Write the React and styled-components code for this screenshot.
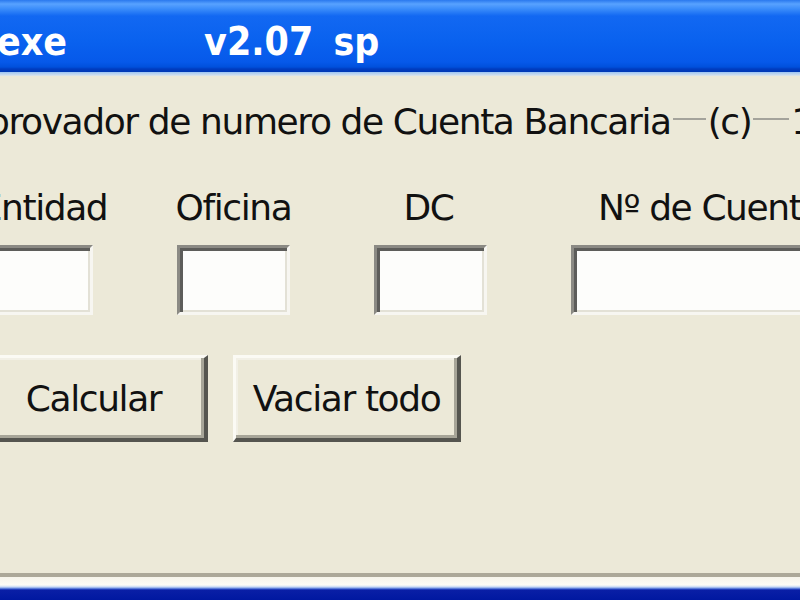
import React from 'react';
import styled, { createGlobalStyle } from 'styled-components';

const GlobalStyle = createGlobalStyle`
	html, body {
		margin: 0;
		padding: 0;
		width: 800px;
		height: 600px;
		overflow: hidden;
		background: #ece9d8;
	}
	#root {
		height: 600px;
	}
`;

const fields = [
	{ label: 'Entidad', width: 113, shift: 7 },
	{ label: 'Oficina', width: 113 },
	{ label: 'DC', width: 113, shift: -2 },
	{ label: 'Nº de Cuenta', width: 330, inset: 27 },
];

export const App = () => (
	<>
		<GlobalStyle />
		<Window>
			<TitleBar>
				<TitleText>exe</TitleText>
				<TitleText>v2.07 sp</TitleText>
			</TitleBar>
			<TitleEdge />
			<Body>
				<Caption>
					<CaptionText>Comprovador de numero de Cuenta Bancaria</CaptionText>
					<Rule $width={33} />
					<CaptionText>(c)</CaptionText>
					<Rule $width={36} />
					<CaptionText>1</CaptionText>
				</Caption>
				<Fields>
					{fields.map((f) => (
						<Field key={f.label} $width={f.width}>
							<Label $inset={f.inset} $shift={f.shift}>
								{f.label}
							</Label>
							<TextBox type="text" />
						</Field>
					))}
				</Fields>
				<Buttons>
					<Button>Calcular</Button>
					<Button>Vaciar todo</Button>
				</Buttons>
			</Body>
			<BottomFrame />
		</Window>
	</>
);

export default App;

// styles
const Window = styled.div`
	display: flex;
	flex-direction: column;
	width: 800px;
	height: 600px;
	overflow: hidden;
	font-family: 'DejaVu Sans', 'Liberation Sans', sans-serif;
	color: #111;
`;

const TitleBar = styled.div`
	display: flex;
	align-items: center;
	gap: 137px;
	flex-shrink: 0;
	height: 72px;
	background: linear-gradient(
		to bottom,
		#2a78ee 0px,
		#58a2ff 4px,
		#3a8cfa 9px,
		#1268f2 16px,
		#0a62ef 40px,
		#0659ea 62px,
		#0050dc 67px,
		#003cc0 69px,
		#0038b4 72px
	);
`;

const TitleText = styled.span`
	font-weight: bold;
	font-size: 35px;
	line-height: 1;
	color: #fff;
	word-spacing: 8px;
	white-space: pre;
	transform: scaleY(1.12);
	margin-top: 12px;
	&:first-child {
		margin-left: -3px;
	}
`;

const TitleEdge = styled.div`
	flex-shrink: 0;
	height: 4px;
	background: linear-gradient(to bottom, #9cc4f4, #dfe6ea);
`;

const Body = styled.div`
	flex: 1;
	display: flex;
	flex-direction: column;
	margin-left: -20px;
	padding-top: 24px;
	border-bottom: 4px solid #aca899;
`;

const Caption = styled.div`
	display: flex;
	align-items: center;
	height: 44px;
	margin-left: -73px;
	white-space: nowrap;
`;

const CaptionText = styled.span`
	font-size: 36px;
	letter-spacing: -1.4px;
	line-height: 1;
	padding: 0 2px;
`;

const Rule = styled.span`
	flex: 0 0 ${({ $width }) => $width}px;
	height: 2px;
	margin-top: -6px;
	background: #a4a39b;
`;

const Fields = styled.div`
	display: flex;
	gap: 84px;
	margin-top: 46px;
`;

const Field = styled.div`
	display: flex;
	flex-direction: column;
	align-items: center;
	flex: 0 0 ${({ $width }) => $width}px;
	width: ${({ $width }) => $width}px;
	min-width: 0;
`;

const Label = styled.span`
	font-size: 36px;
	letter-spacing: -1.4px;
	line-height: 1;
	white-space: nowrap;
	align-self: ${({ $inset }) => ($inset ? 'flex-start' : 'center')};
	padding-left: ${({ $inset }) => $inset || 0}px;
	margin-left: ${({ $shift }) => ($shift || 0) * 2}px;
`;

const TextBox = styled.input`
	box-sizing: border-box;
	align-self: stretch;
	width: 100%;
	min-width: 0;
	height: 70px;
	margin-top: 19px;
	padding: 0;
	background: #fdfdfb;
	border-style: solid;
	border-width: 3px;
	border-color: #8b8a84 #f7f6f1 #f7f6f1 #8b8a84;
	box-shadow: inset 3px 3px 0 #5d5d5a, inset -2px -2px 0 #e3e1d6;
	outline: none;
`;

const Buttons = styled.div`
	display: flex;
	gap: 25px;
	margin-top: 40px;
`;

const Button = styled.button`
	box-sizing: border-box;
	width: 228px;
	height: 87px;
	padding: 0;
	font-family: 'DejaVu Sans', 'Liberation Sans', sans-serif;
	font-size: 36px;
	letter-spacing: -1.4px;
	color: #111;
	background: #ece9d8;
	border-style: solid;
	border-width: 3px 4px 4px 3px;
	border-color: #fbfaf4 #55554f #55554f #fbfaf4;
	box-shadow: inset -3px -3px 0 #a7a598, inset 2px 2px 0 #f2f0e6;
`;

const BottomFrame = styled.div`
	flex-shrink: 0;
	height: 23px;
	background: linear-gradient(
		to bottom,
		#f6f4ea 0px,
		#fdfcf6 8px,
		#c4d8f6 10px,
		#3a5ed0 12px,
		#0a1fa6 13px,
		#0018a0 23px
	);
`;
